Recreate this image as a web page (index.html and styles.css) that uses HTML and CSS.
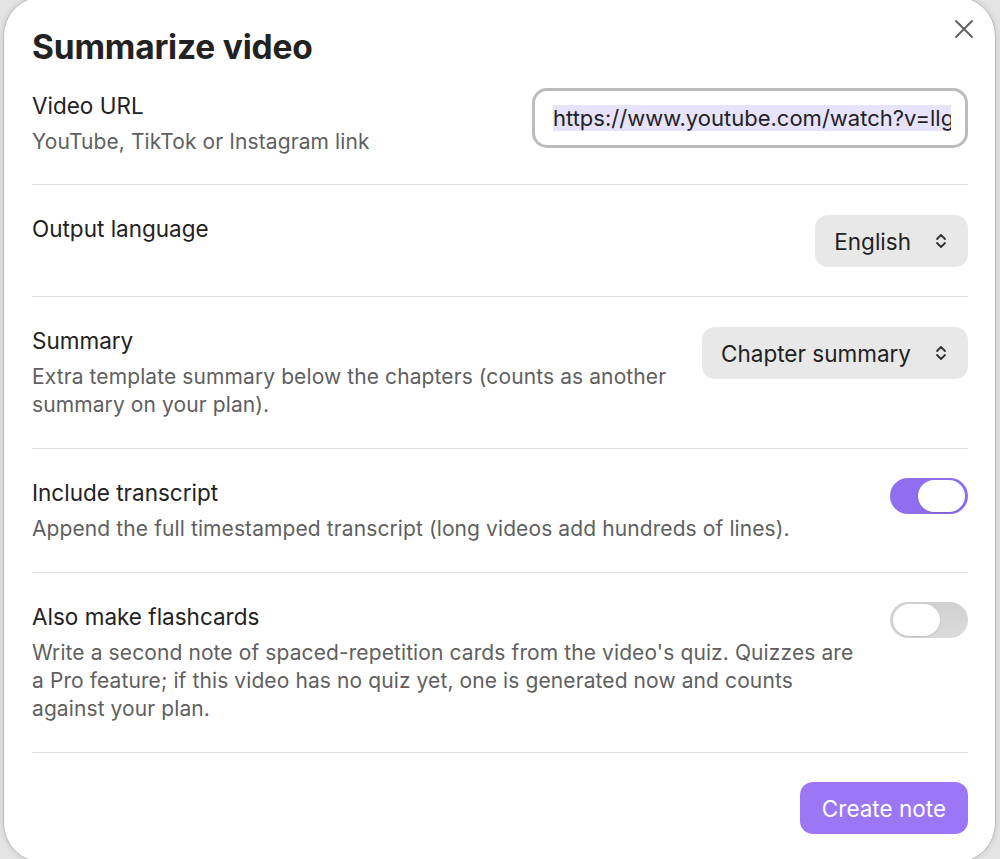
FILE: index.html
```html
<!DOCTYPE html>
<html lang="en">

<head>
      <meta charset="UTF-8">
      <meta name="viewport" content="width=device-width, initial-scale=1.0">
      <title>Summarize video</title>
      <link rel="stylesheet" href="styles.css">
</head>

<body>
      <div class="modal">
            <button class="closeBtn" type="button" aria-label="Close">
                  <svg width="20" height="20" viewBox="0 0 20 20">
                        <path d="M2 2 L18 18 M18 2 L2 18" stroke="#5f5f5f" stroke-width="1.9" stroke-linecap="round" fill="none" />
                  </svg>
            </button>

            <h1 class="modalTitle">Summarize video</h1>

            <!-- url -->
            <div class="setting first">
                  <div class="info">
                        <p class="label">Video URL</p>
                        <p class="desc">YouTube, TikTok or Instagram link</p>
                  </div>
                  <div class="control">
                        <div class="urlField">
                              <div class="urlText"><span class="sel">https://www.youtube.com/watch?v=llgQ8xK2pVs</span></div>
                        </div>
                  </div>
            </div>

            <!-- language -->
            <div class="setting">
                  <div class="info">
                        <p class="label">Output language</p>
                  </div>
                  <div class="control">
                        <div class="dropdown">
                              <span>English</span>
                              <svg width="12" height="18" viewBox="0 0 12 18">
                                    <path d="M2 7 L6 3 L10 7 M2 11 L6 15 L10 11" stroke="#333" stroke-width="1.8" stroke-linecap="round" stroke-linejoin="round" fill="none" />
                              </svg>
                        </div>
                  </div>
            </div>

            <!-- summary -->
            <div class="setting">
                  <div class="info">
                        <p class="label">Summary</p>
                        <p class="desc">Extra template summary below the chapters (counts as another summary on your plan).</p>
                  </div>
                  <div class="control">
                        <div class="dropdown">
                              <span>Chapter summary</span>
                              <svg width="12" height="18" viewBox="0 0 12 18">
                                    <path d="M2 7 L6 3 L10 7 M2 11 L6 15 L10 11" stroke="#333" stroke-width="1.8" stroke-linecap="round" stroke-linejoin="round" fill="none" />
                              </svg>
                        </div>
                  </div>
            </div>

            <!-- transcript -->
            <div class="setting">
                  <div class="info">
                        <p class="label">Include transcript</p>
                        <p class="desc">Append the full timestamped transcript (long videos add hundreds of lines).</p>
                  </div>
                  <div class="control">
                        <div class="toggle on"><div class="knob"></div></div>
                  </div>
            </div>

            <!-- flashcards -->
            <div class="setting">
                  <div class="info">
                        <p class="label">Also make flashcards</p>
                        <p class="desc">Write a second note of spaced-repetition cards from the video's quiz. Quizzes are a Pro feature; if this video has no quiz yet, one is generated now and counts against your plan.</p>
                  </div>
                  <div class="control">
                        <div class="toggle"><div class="knob"></div></div>
                  </div>
            </div>

            <div class="footer">
                  <button class="createBtn" type="button">Create note</button>
            </div>
      </div>
</body>

</html>
```

FILE: styles.css
```css
/* page behind the modal */
body {
      margin: 0;
      background-color: #e4e4e4;
      font-family: Inter, "Noto Sans", sans-serif;
      overflow: hidden;
}

/* modal box */
div.modal {
      position: relative;
      box-sizing: border-box;
      width: 993px;
      height: 867px;
      margin: -4px 0 0 3px;
      padding: 30px 27px 0 28px;
      background-color: #fff;
      border: 1px solid #bdbdbd;
      border-radius: 40px;
      box-shadow: 0 0 6px rgba(0, 0, 0, 0.12);
}

button.closeBtn {
      position: absolute;
      top: 18px;
      right: 17px;
      width: 28px;
      height: 28px;
      padding: 0;
      border: none;
      background: none;
      display: flex;
      align-items: center;
      justify-content: center;
}

h1.modalTitle {
      margin: 0 0 25px 0;
      font-size: 33.5px;
      line-height: 40px;
      font-weight: 700;
      color: #222;
      letter-spacing: -0.2px;
}

/* setting rows */
div.setting {
      display: flex;
      align-items: flex-start;
      gap: 30px;
      padding: 30px 0 29px 0;
      border-top: 1px solid #e3e3e3;
}

div.setting.first {
      padding-top: 0;
      padding-bottom: 28px;
      border-top: none;
}

div.info {
      flex: 1;
}

p.label {
      margin: 0;
      font-size: 22.5px;
      line-height: 28px;
      color: #222;
}

p.desc {
      margin: 8px 0 0 0;
      font-size: 21px;
      line-height: 28px;
      color: #5f5f5f;
      letter-spacing: 0.1px;
}

div.control {
      flex-shrink: 0;
}

/* url input with focus ring */
div.urlField {
      box-sizing: border-box;
      width: 436px;
      height: 60px;
      margin-top: -4px;
      padding: 0 14px 0 18px;
      border: 3px solid #bcbcbc;
      border-radius: 15px;
      display: flex;
      align-items: center;
}

div.urlText {
      overflow: hidden;
      white-space: nowrap;
      font-size: 22px;
      line-height: 27px;
      color: #222;
}

span.sel {
      background-color: #e8e3fd;
}

/* dropdowns */
div.dropdown {
      box-sizing: border-box;
      height: 52px;
      padding: 0 21px 0 19px;
      border-radius: 13px;
      background-color: #e8e8e8;
      display: flex;
      align-items: center;
      gap: 24px;
      font-size: 22.5px;
      color: #222;
}

/* toggles */
div.toggle {
      box-sizing: border-box;
      width: 78px;
      height: 36px;
      margin-top: -1px;
      padding: 2px 3px;
      border-radius: 18px;
      background: linear-gradient(#d0d0d0, #dcdcdc);
      display: flex;
      justify-content: flex-start;
}

div.toggle.on {
      background: #8f6ff0;
      justify-content: flex-end;
}

div.knob {
      width: 47px;
      height: 32px;
      border-radius: 16px;
      background-color: #fff;
      box-shadow: 0 1px 2px rgba(0, 0, 0, 0.15);
}

/* footer */
div.footer {
      display: flex;
      justify-content: flex-end;
      padding-top: 29px;
      border-top: 1px solid #e3e3e3;
}

button.createBtn {
      height: 52px;
      padding: 0 22px;
      border: none;
      border-radius: 13px;
      background-color: #9b76f5;
      color: #fff;
      font-family: Inter, "Noto Sans", sans-serif;
      font-size: 22.5px;
}
```
